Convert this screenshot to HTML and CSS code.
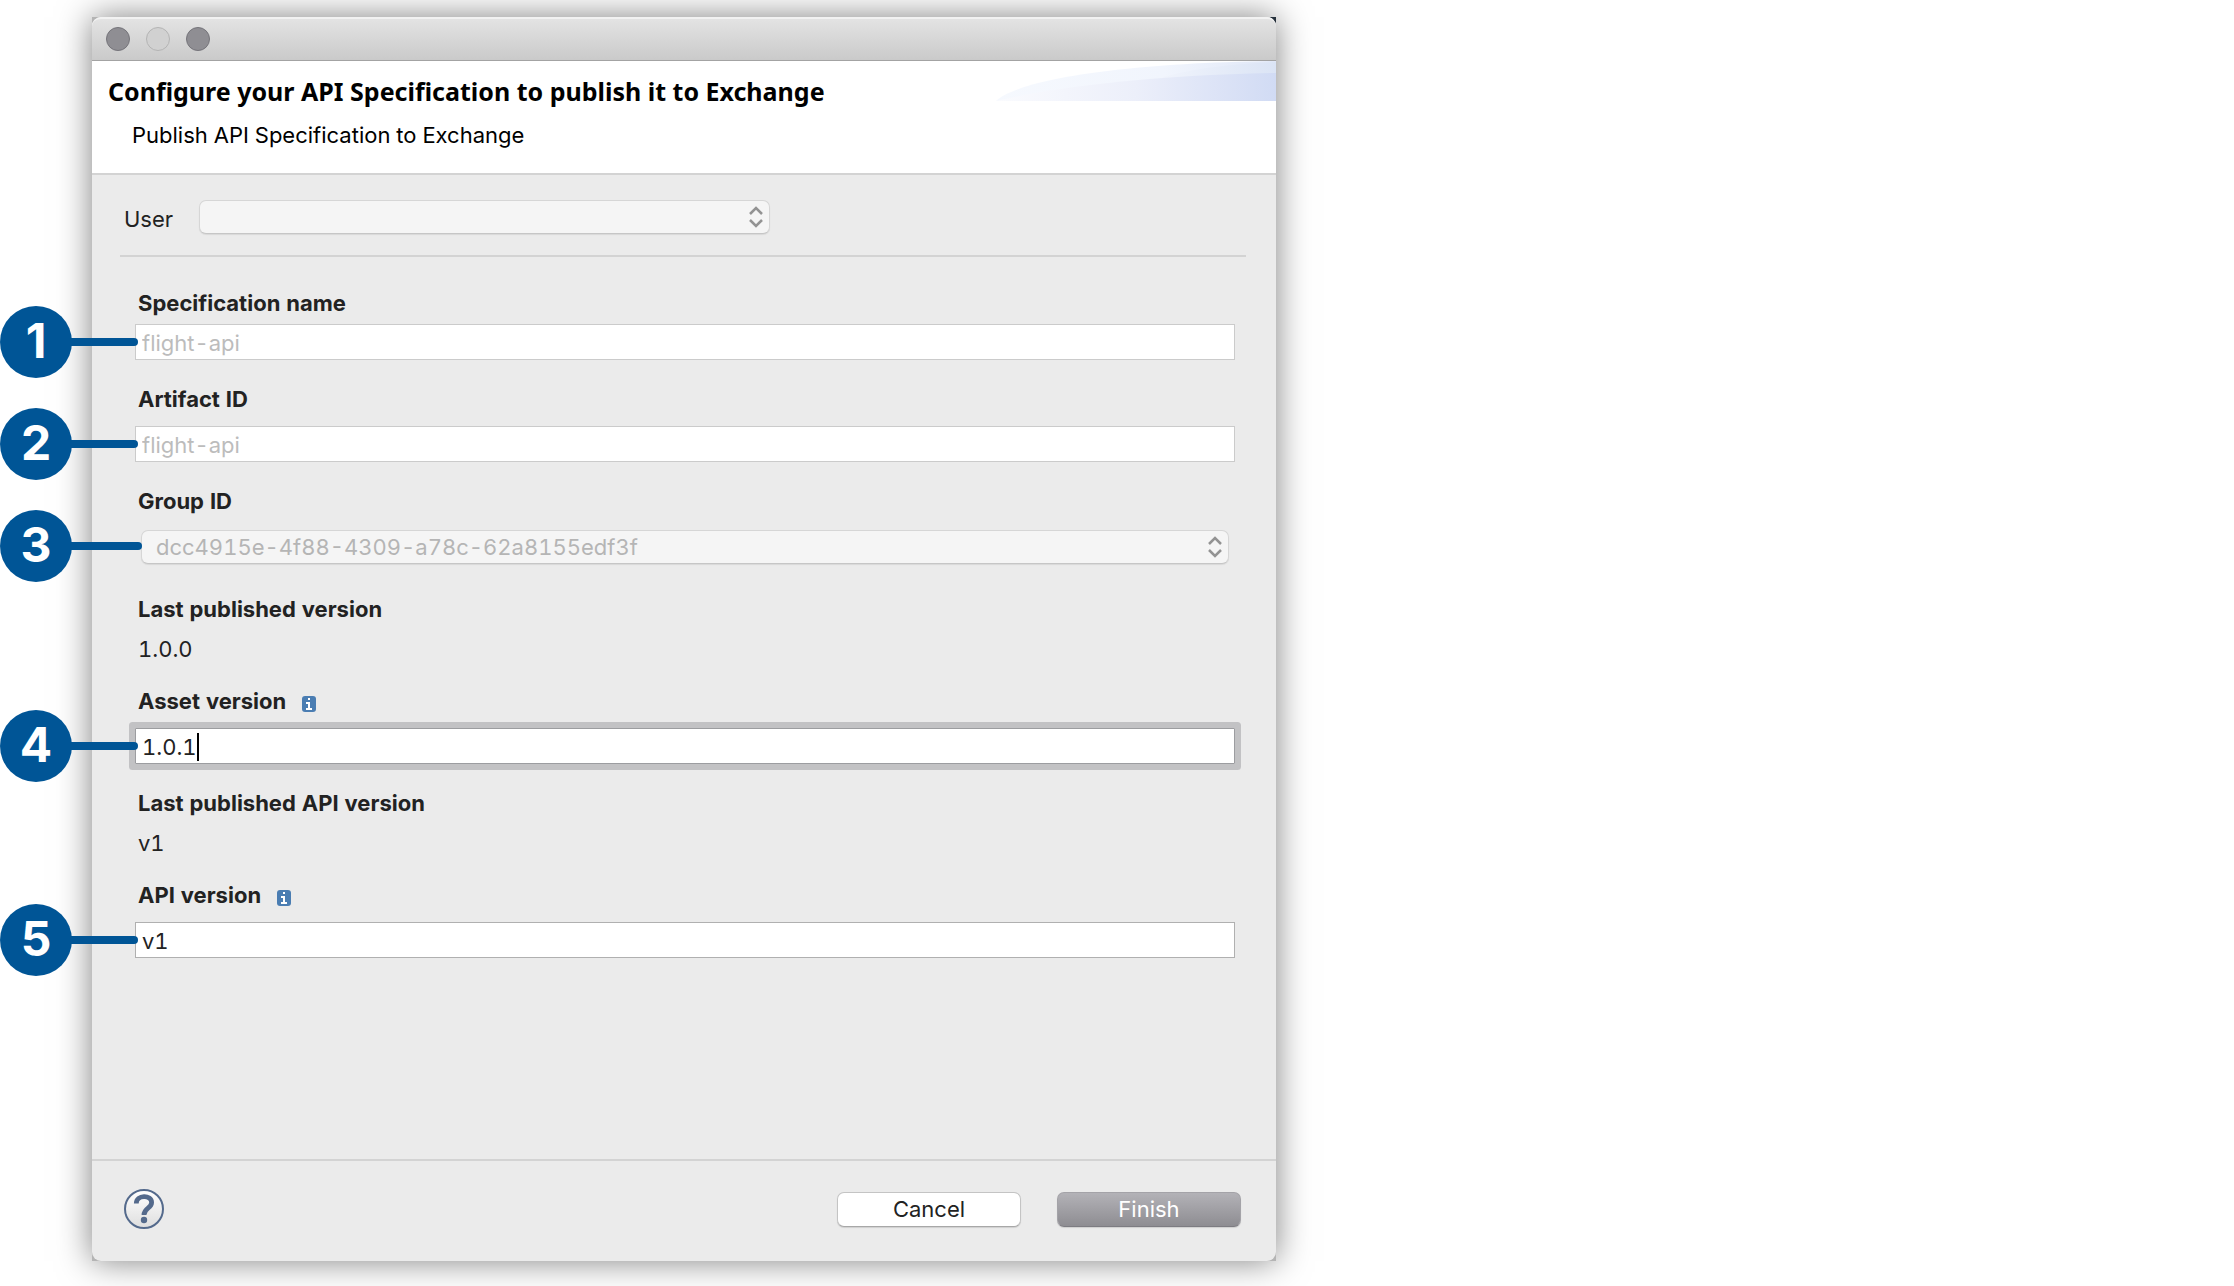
FILE: index.html
```html
<!DOCTYPE html>
<html lang="en">
<head>
<meta charset="utf-8">
<title>Publish API Specification to Exchange</title>
<link rel="stylesheet" href="styles.css">
</head>
<body>
<main class="stage">
  <div class="frame">
    <form class="dialog">
      <div class="titlebar">
        <span class="light"></span>
        <span class="light light-off"></span>
        <span class="light"></span>
      </div>

      <header class="header">
        <div class="header-text">
          <h1 class="title">Configure your API Specification to publish it to Exchange</h1>
          <p class="subtitle">Publish API Specification to Exchange</p>
        </div>
        <svg class="wave" width="280" height="40" viewBox="0 0 280 40" aria-hidden="true">
          <defs>
            <linearGradient id="back" x1="0" x2="1"><stop offset="0" stop-color="#f6f9fe"/><stop offset=".6" stop-color="#f1f5fd"/><stop offset="1" stop-color="#e0e7f7"/></linearGradient>
            <linearGradient id="mid" x1="0" x2="1"><stop offset="0" stop-color="#f3f6fd"/><stop offset="1" stop-color="#dbe4f5"/></linearGradient>
            <linearGradient id="front" x1="0" x2="1"><stop offset="0" stop-color="#fafbfe"/><stop offset=".5" stop-color="#eceffa"/><stop offset="1" stop-color="#d1dbf4"/></linearGradient>
          </defs>
          <path fill="url(#back)" d="M0 40C20 20 120 2 280 0V40Z"/>
          <path fill="url(#mid)" d="M150 22C180 10 225 3 280 1V40H150Z"/>
          <path fill="url(#front)" d="M0 40C50 28 150 14 280 12V40Z"/>
        </svg>
      </header>

      <div class="body">
        <div class="user-row">
          <label class="user-label" for="user">User</label>
          <div class="select-box user-select">
            <select class="select" id="user" disabled><option></option></select>
            <svg class="arrows" width="14" height="22" viewBox="0 0 14 22" aria-hidden="true"><path d="M1 8L7 2L13 8M1 14L7 20L13 14"/></svg>
          </div>
        </div>

        <div class="fields">
          <div class="field field-tight">
            <label class="label" for="spec">Specification name</label>
            <div class="control">
              <span class="callout">1</span>
              <input class="input" id="spec" type="text" value="flight-api" disabled>
            </div>
          </div>

          <div class="field">
            <label class="label" for="artifact">Artifact ID</label>
            <div class="control">
              <span class="callout">2</span>
              <input class="input" id="artifact" type="text" value="flight-api" disabled>
            </div>
          </div>

          <div class="field">
            <label class="label" for="group">Group ID</label>
            <div class="control control-select">
              <span class="callout callout-long">3</span>
              <div class="select-box">
                <select class="select" id="group" disabled><option>dcc4915e-4f88-4309-a78c-62a8155edf3f</option></select>
                <svg class="arrows" width="14" height="22" viewBox="0 0 14 22" aria-hidden="true"><path d="M1 8L7 2L13 8M1 14L7 20L13 14"/></svg>
              </div>
            </div>
          </div>

          <dl class="published">
            <dt class="label">Last published version</dt>
            <dd class="value">1.0.0</dd>
          </dl>

          <div class="field">
            <div class="label-row">
              <label class="label" for="asset">Asset version</label>
              <svg class="info" width="14" height="16" viewBox="0 0 14 16" aria-hidden="true"><rect width="14" height="16" rx="3" fill="#4a7db2"/><path fill="#fff" d="M6 2h2v2H6zM4 6h4v6h2v2H4v-2h2V8H4z"/></svg>
            </div>
            <div class="control">
              <span class="callout">4</span>
              <input class="input input-focus" id="asset" type="text" value="1.0.1">
              <span class="caret"></span>
            </div>
          </div>

          <dl class="published">
            <dt class="label">Last published API version</dt>
            <dd class="value">v1</dd>
          </dl>

          <div class="field">
            <div class="label-row">
              <label class="label" for="api">API version</label>
              <svg class="info" width="14" height="16" viewBox="0 0 14 16" aria-hidden="true"><rect width="14" height="16" rx="3" fill="#4a7db2"/><path fill="#fff" d="M6 2h2v2H6zM4 6h4v6h2v2H4v-2h2V8H4z"/></svg>
            </div>
            <div class="control">
              <span class="callout">5</span>
              <input class="input" id="api" type="text" value="v1">
            </div>
          </div>
        </div>
      </div>

      <footer class="footer">
        <button class="help" type="button" aria-label="Help">
          <svg width="40" height="40" viewBox="0 0 40 40" aria-hidden="true">
            <defs><linearGradient id="disc" x1="0" y1="0" x2="0" y2="1"><stop offset="0" stop-color="#fff"/><stop offset="1" stop-color="#dedede"/></linearGradient></defs>
            <circle cx="20" cy="20" r="19" fill="url(#disc)" stroke="#546a8c" stroke-width="2"/>
            <path d="M12.300 14.500C12.300 5.500 27.600 5.500 27.600 13.500C27.600 19.500 20 19 20 26" fill="none" stroke="#546a8c" stroke-width="4.800"/>
            <circle cx="20" cy="31" r="3.200" fill="#546a8c"/>
          </svg>
        </button>
        <button class="button" type="button">Cancel</button>
        <button class="button button-primary" type="submit">Finish</button>
      </footer>
    </form>
  </div>
</main>
</body>
</html>
```

FILE: styles.css
```css
* {
  box-sizing: border-box;
}

body {
  margin: 0;
  background: #fff;
  color: #222;
  font-family: Inter, "Liberation Sans", sans-serif;
  font-size: 22px;
  font-variant-numeric: tabular-nums;
  line-height: 28px;
}

.stage {
  display: flex;
  min-height: 100vh;
  padding: 17px 92px 25px;
}

.frame {
  display: flex;
  flex: 1;
  max-width: 1184px;
  background: linear-gradient(to bottom left, #26313c 12px, #b4b4b4 12px);
  box-shadow: 0 0 32px rgba(0, 0, 0, 0.5);
}

.dialog {
  display: flex;
  flex: 1;
  flex-direction: column;
  min-width: 0;
  border-radius: 9px;
  background: #ebebeb;
}

.titlebar {
  display: flex;
  gap: 16px;
  align-items: center;
  height: 44px;
  padding: 0 14px 2px;
  border-top: 2px solid #f2f2f2;
  border-bottom: 1px solid #a3a3a3;
  border-radius: 9px 9px 0 0;
  background: linear-gradient(#e3e3e3, #cacaca);
}

.light {
  width: 24px;
  height: 24px;
  border: 1px solid #75747a;
  border-radius: 50%;
  background: #8f8e93;
}

.light-off {
  border-color: #b4b4b4;
  background: #d1d1d1;
}

.header {
  display: flex;
  justify-content: space-between;
  align-items: flex-start;
  height: 114px;
  border-bottom: 2px solid #d3d3d3;
  background: #fff;
  color: #000;
}

.header-text {
  padding: 15px 0 0 16px;
}

.title {
  margin: 0;
  font: bold 25px/30px "Noto Sans", "Open Sans", sans-serif;
}

.subtitle {
  margin: 15px 0 0 24px;
}

.wave {
  flex: none;
}

.body {
  flex: 1;
  padding: 25px 30px 0 28px;
}

.user-row {
  display: flex;
  gap: 26px;
  align-items: center;
  padding: 0 4px 21px;
  border-bottom: 2px solid #d3d3d3;
}

.user-label {
  padding-top: 4px;
}

.user-select {
  flex: 0 1 571px;
}

.select-box {
  position: relative;
  display: flex;
  min-width: 0;
}

.select {
  width: 100%;
  height: 34px;
  padding: 0 40px 0 14px;
  border: 1px solid #d6d6d6;
  border-bottom-color: #c6c6c6;
  border-radius: 7px;
  appearance: none;
  background: #f5f5f5;
  box-shadow: 0 1px 1px rgba(0, 0, 0, 0.08);
  color: #b5b5b5;
  font: inherit;
  font-variant-numeric: tabular-nums;
  opacity: 1;
}

.arrows {
  position: absolute;
  top: 6px;
  right: 7px;
  fill: none;
  stroke: #939393;
  stroke-width: 2.5;
}

.fields {
  display: flex;
  flex-direction: column;
  padding: 32px 11px 0 15px;
}

.field {
  display: flex;
  flex-direction: column;
  gap: 13px;
  margin-bottom: 25px;
}

.field-tight {
  gap: 7px;
}

.label-row {
  display: flex;
  gap: 16px;
  align-items: center;
}

.label {
  padding-left: 3px;
  font-weight: 700;
}

.info {
  margin-top: 6px;
}

.control {
  position: relative;
  display: flex;
  flex-direction: column;
}

.control-select {
  padding: 2px 6px 6px;
}

.input {
  width: 100%;
  height: 36px;
  padding: 2px 6px 0;
  border: 1px solid #b0b0b0;
  border-radius: 0;
  outline: none;
  background: #fff;
  color: #222;
  font: inherit;
  font-variant-numeric: tabular-nums;
}

.input:disabled {
  border-color: #cbcbcb;
  color: #bcbcbc;
}

.input-focus {
  border-color: #9c9da0;
  border-radius: 1px;
  box-shadow: 0 0 0 6px #c2c2c4;
}

.caret {
  position: absolute;
  top: 5px;
  left: 62px;
  width: 2px;
  height: 28px;
  background: #000;
}

/* Numbered markers in the margin, each joined to its control by a line. */
.callout {
  position: absolute;
  z-index: 1;
  top: -18px;
  left: -135px;
  width: 72px;
  height: 72px;
  border-radius: 50%;
  background: #005596;
  color: #fff;
  font: bold 48px/70px Inter, "Liberation Sans", sans-serif;
  text-align: center;
}

.callout::after {
  position: absolute;
  top: 32px;
  left: 68px;
  width: 70px;
  height: 8px;
  border-radius: 0 4px 4px 0;
  background: #005596;
  content: "";
}

.callout-long::after {
  width: 74px;
}

.published {
  display: flex;
  flex-direction: column;
  gap: 12px;
  margin: 0 0 24px;
}

.value {
  margin: 0;
  padding-left: 3px;
}

.footer {
  display: flex;
  gap: 36px;
  align-items: center;
  height: 102px;
  padding: 0 35px 4px 32px;
  border-top: 2px solid #d3d3d3;
}

.help {
  display: flex;
  margin-right: auto;
  padding: 0;
  border: 0;
  border-radius: 50%;
  background: none;
}

.button {
  width: 184px;
  height: 35px;
  padding: 0;
  border: 1px solid #c4c4c4;
  border-bottom-color: #a8a8a8;
  border-radius: 7px;
  background: #fff;
  box-shadow: 0 1px 1px rgba(0, 0, 0, 0.12);
  color: #222;
  font: inherit;
}

.button-primary {
  border-color: #a4a3a8;
  border-bottom-color: #7d7c82;
  background: linear-gradient(#b3b2b7, #8e8d92);
  color: #fff;
}
```
